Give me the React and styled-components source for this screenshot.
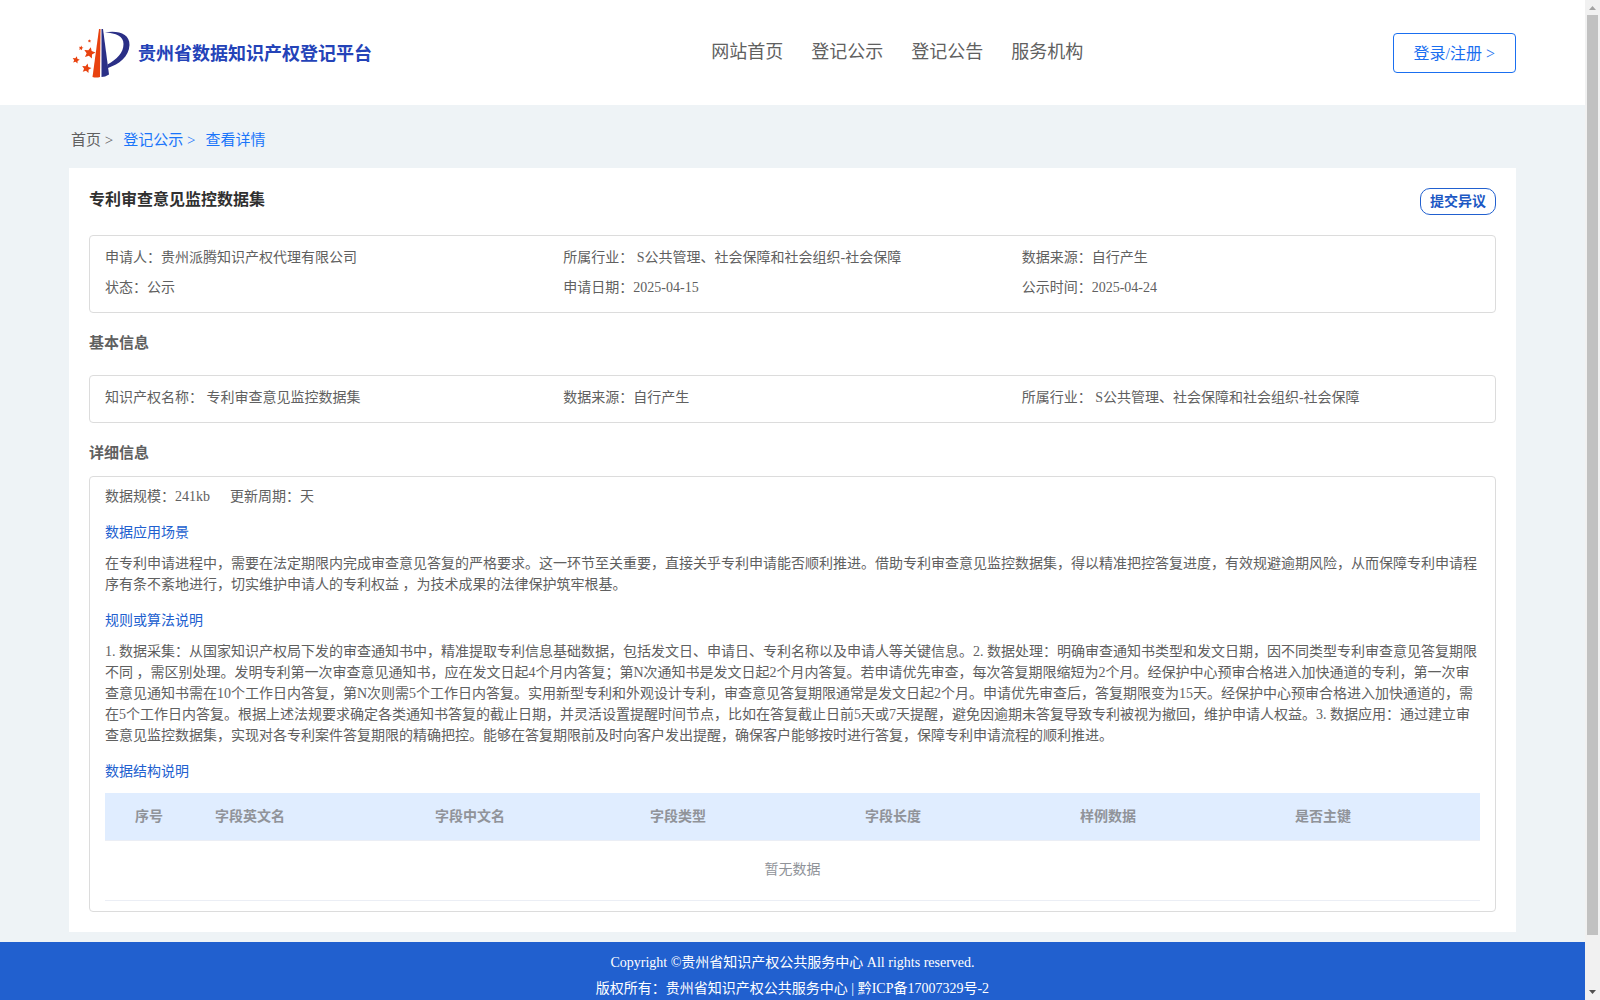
import React from 'react'
import styled, { createGlobalStyle } from 'styled-components';

const fields = [
  { name: '序号', width: '100px' },
  { name: '字段英文名', width: '16%' },
  { name: '字段中文名' },
  { name: '字段类型' },
  { name: '字段长度' },
  { name: '样例数据' },
  { name: '是否主键', width: '195px' },
];

const Logo = () => (
  <LogoMark viewBox="0 0 58 50" aria-hidden="true">
    <path d="M27 1 L28.500 1 L28 49 Q24 50 20.500 49 Z" fill="#e8420f" />
    <path d="M29.500 1 L31 1 L37 46.500 Q33 49 29.500 49 Z" fill="#2a2f86" />
    <path d="M33 4.500 C46 2 58 6 57.500 17 C57 29 47 36 36 40 L35.500 36.500 C45 31 51.500 25 51.500 16 C51.500 8 44 5 33 4.500 Z" fill="#2a2f86" />
    <g fill="#e8420f">
      <Star cx={17.500} cy={25} r={6} />
      <Star cx={4} cy={32} r={3.800} />
      <Star cx={14.500} cy={40.500} r={5} />
      <Star cx={9} cy={20} r={2.500} />
      <Star cx={17.500} cy={13} r={1.800} />
    </g>
  </LogoMark>
)

const Star = ({ cx, cy, r }) => {
  const points = Array.from({ length: 10 }, (_, i) => {
    const a = (Math.PI / 5) * i - 1.35
    const d = i % 2 ? r * 0.48 : r
    return `${cx + d * Math.cos(a)},${cy + d * Math.sin(a)}`
  })
  return <polygon points={points.join(' ')} />
}

class App extends React.Component {
  render() {
    return (
      <Shell>
        <GlobalStyle />
        <Page>
          <Header>
            <Brand href="#">
              <Logo />
              <BrandName>贵州省数据知识产权登记平台</BrandName>
            </Brand>
            <Nav>
              <NavLink href="#">网站首页</NavLink>
              <NavLink href="#">登记公示</NavLink>
              <NavLink href="#">登记公告</NavLink>
              <NavLink href="#">服务机构</NavLink>
            </Nav>
            <LoginButton type="button">登录/注册 &gt;</LoginButton>
          </Header>
          <Main>
            <Breadcrumb>
              <Crumb href="#">首页 &gt;</Crumb>
              <Crumb href="#" $active>登记公示 &gt;</Crumb>
              <Crumb href="#" $active>查看详情</Crumb>
            </Breadcrumb>
            <Card>
              <CardHeader>
                <CardTitle>专利审查意见监控数据集</CardTitle>
                <ObjectionButton type="button">提交异议</ObjectionButton>
              </CardHeader>
              <InfoBox>
                <InfoItem>申请人：贵州派腾知识产权代理有限公司</InfoItem>
                <InfoItem>所属行业： S公共管理、社会保障和社会组织-社会保障</InfoItem>
                <InfoItem>数据来源：自行产生</InfoItem>
                <InfoItem>状态：公示</InfoItem>
                <InfoItem>申请日期：2025-04-15</InfoItem>
                <InfoItem>公示时间：2025-04-24</InfoItem>
              </InfoBox>
              <SectionTitle $gap="21px">基本信息</SectionTitle>
              <InfoBox>
                <InfoItem>知识产权名称： 专利审查意见监控数据集</InfoItem>
                <InfoItem>数据来源：自行产生</InfoItem>
                <InfoItem>所属行业： S公共管理、社会保障和社会组织-社会保障</InfoItem>
              </InfoBox>
              <SectionTitle $gap="12px">详细信息</SectionTitle>
              <DetailBox>
                <DetailMeta>
                  <span>数据规模：241kb</span>
                  <span>更新周期：天</span>
                </DetailMeta>
                <DetailTitle>数据应用场景</DetailTitle>
                <DetailText>
                  在专利申请进程中，需要在法定期限内完成审查意见答复的严格要求。这一环节至关重要，直接关乎专利申请能否顺利推进。借助专利审查意见监控数据集，得以精准把控答复进度，有效规避逾期风险，从而保障专利申请程序有条不紊地进行，切实维护申请人的专利权益 ，为技术成果的法律保护筑牢根基。
                </DetailText>
                <DetailTitle>规则或算法说明</DetailTitle>
                <DetailText>
                  1. 数据采集：从国家知识产权局下发的审查通知书中，精准提取专利信息基础数据，包括发文日、申请日、专利名称以及申请人等关键信息。2. 数据处理：明确审查通知书类型和发文日期，因不同类型专利审查意见答复期限不同 ，需区别处理。发明专利第一次审查意见通知书，应在发文日起4个月内答复；第N次通知书是发文日起2个月内答复。若申请优先审查，每次答复期限缩短为2个月。经保护中心预审合格进入加快通道的专利，第一次审查意见通知书需在10个工作日内答复，第N次则需5个工作日内答复。实用新型专利和外观设计专利，审查意见答复期限通常是发文日起2个月。申请优先审查后，答复期限变为15天。经保护中心预审合格进入加快通道的，需在5个工作日内答复。根据上述法规要求确定各类通知书答复的截止日期，并灵活设置提醒时间节点，比如在答复截止日前5天或7天提醒，避免因逾期未答复导致专利被视为撤回，维护申请人权益。3. 数据应用：通过建立审查意见监控数据集，实现对各专利案件答复期限的精确把控。能够在答复期限前及时向客户发出提醒，确保客户能够按时进行答复，保障专利申请流程的顺利推进。
                </DetailText>
                <DetailTitle>数据结构说明</DetailTitle>
                <FieldTable>
                  <colgroup>
                    {fields.map(field => <Col key={field.name} $width={field.width} />)}
                  </colgroup>
                  <thead>
                    <tr>
                      {fields.map(field => <FieldHead key={field.name} scope="col">{field.name}</FieldHead>)}
                    </tr>
                  </thead>
                  <tbody>
                    <tr>
                      <EmptyCell colSpan={fields.length}>暂无数据</EmptyCell>
                    </tr>
                  </tbody>
                </FieldTable>
              </DetailBox>
            </Card>
          </Main>
          <Footer>
            <FooterLine>Copyright ©贵州省知识产权公共服务中心 All rights reserved.</FooterLine>
            <FooterLine>版权所有：贵州省知识产权公共服务中心 | <FooterLink href="#">黔ICP备17007329号-2</FooterLink></FooterLine>
          </Footer>
        </Page>
        <ScrollTrack aria-hidden="true">
          <ScrollArrow viewBox="0 0 15 15"><path d="M4 10h7L7.500 6z" fill="#a3a3a3" /></ScrollArrow>
          <ScrollThumb />
          <ScrollArrow viewBox="0 0 15 15"><path d="M4 5h7L7.500 9z" fill="#505050" /></ScrollArrow>
        </ScrollTrack>
      </Shell>
    )
  }
}

export default App

const GlobalStyle = createGlobalStyle`
  * {
    box-sizing: border-box;
  }
  body {
    margin: 0;
    color: #606060;
    font-family: "Liberation Serif", "Noto Sans CJK SC", serif;
    font-size: 14px;
    line-height: 21px;
    text-spacing-trim: space-all;
  }
  a {
    text-decoration: none;
  }
  button {
    font-family: inherit;
    background: #fff;
    cursor: pointer;
  }
`;

const Shell = styled.div`
  display: flex;
  height: 100vh;
`;

const Page = styled.div`
  flex: 1;
  min-width: 0;
  overflow-y: auto;
  scrollbar-width: none;
  background: #eef3f6;
`;

const Header = styled.header`
  display: flex;
  justify-content: space-between;
  align-items: center;
  height: 105px;
  padding: 0 69px;
  background: #fff;
`;

const Brand = styled.a`
  display: flex;
  align-items: center;
  gap: 8px;
  padding: 0 30px 0 3px;
  color: #2443b8;
`;

const LogoMark = styled.svg`
  width: 58px;
  height: 50px;
`;

const BrandName = styled.span`
  padding-top: 3px;
  font-size: 18px;
  font-weight: bold;
  line-height: 24px;
`;

const Nav = styled.nav`
  display: flex;
  gap: 28px;
  padding-bottom: 2px;
`;

const NavLink = styled.a`
  color: #606060;
  font-size: 18px;
  line-height: 24px;
`;

const LoginButton = styled.button`
  height: 40px;
  padding: 0 20px 2px;
  border: 1px solid #1a6ff0;
  border-radius: 4px;
  color: #1a6ff0;
  font-size: 16px;
`;

const Main = styled.main`
  padding: 0 69px 10px;
`;

const Breadcrumb = styled.nav`
  display: flex;
  align-items: center;
  gap: 10px;
  height: 63px;
  padding: 7px 2px 0;
`;

const Crumb = styled.a`
  color: ${props => props.$active ? '#1a75fa' : '#606060'};
  font-size: 15px;
`;

const Card = styled.section`
  padding: 20px;
  background: #fff;
`;

const CardHeader = styled.div`
  display: flex;
  justify-content: space-between;
  align-items: flex-start;
  margin-bottom: 20px;
`;

const CardTitle = styled.h1`
  margin: 0;
  color: #303030;
  font-size: 16px;
  line-height: 24px;
`;

const ObjectionButton = styled.button`
  height: 27px;
  padding: 0 9px 3px;
  border: 1px solid #2160cf;
  border-radius: 10px;
  color: #1c58c4;
  font-size: 14px;
  font-weight: bold;
`;

const InfoBox = styled.div`
  display: grid;
  grid-template-columns: repeat(3, 1fr);
  padding: 7px 15px 9px;
  border: 1px solid #dcdcdc;
  border-radius: 4px;
`;

const InfoItem = styled.div`
  line-height: 30px;
`;

const SectionTitle = styled.h2`
  margin: 20px 0 ${props => props.$gap};
  font-size: 15px;
  line-height: 21px;
`;

const DetailBox = styled.div`
  padding: 9px 15px 10px;
  border: 1px solid #dcdcdc;
  border-radius: 4px;
`;

const DetailMeta = styled.div`
  display: flex;
  gap: 20px;
`;

const DetailTitle = styled.h3`
  margin: 15px 0 10px;
  color: #2160cf;
  font-size: 14px;
  font-weight: normal;
`;

const DetailText = styled.p`
  margin: 0;
`;

const FieldTable = styled.table`
  width: 100%;
  margin-top: 11px;
  table-layout: fixed;
  border-collapse: separate;
  border-spacing: 0;
  color: #909399;
`;

const Col = styled.col`
  width: ${props => props.$width || 'auto'};
`;

const FieldHead = styled.th`
  height: 48px;
  padding: 0 10px 1px;
  border-bottom: 1px solid #ebeef5;
  background: #e0edff;
  text-align: left;

  &:first-child {
    padding-left: 30px;
  }
`;

const EmptyCell = styled.td`
  height: 60px;
  padding: 0 0 2px;
  border-bottom: 1px solid #ebeef5;
  text-align: center;
`;

const Footer = styled.footer`
  padding: 8px 0 50px;
  background: #2160cf;
  color: #fff;
  text-align: center;
`;

const FooterLine = styled.div`
  line-height: 26px;
`;

const FooterLink = styled.a`
  color: #fff;
`;

const ScrollTrack = styled.div`
  display: flex;
  flex-direction: column;
  width: 15px;
  background: #f1f1f1;
`;

const ScrollArrow = styled.svg`
  width: 15px;
  height: 15px;
  margin-top: auto;

  &:first-child {
    margin-top: 0;
  }
`;

const ScrollThumb = styled.div`
  height: 92%;
  margin: 0 2px;
  background: #c1c1c1;
`;
